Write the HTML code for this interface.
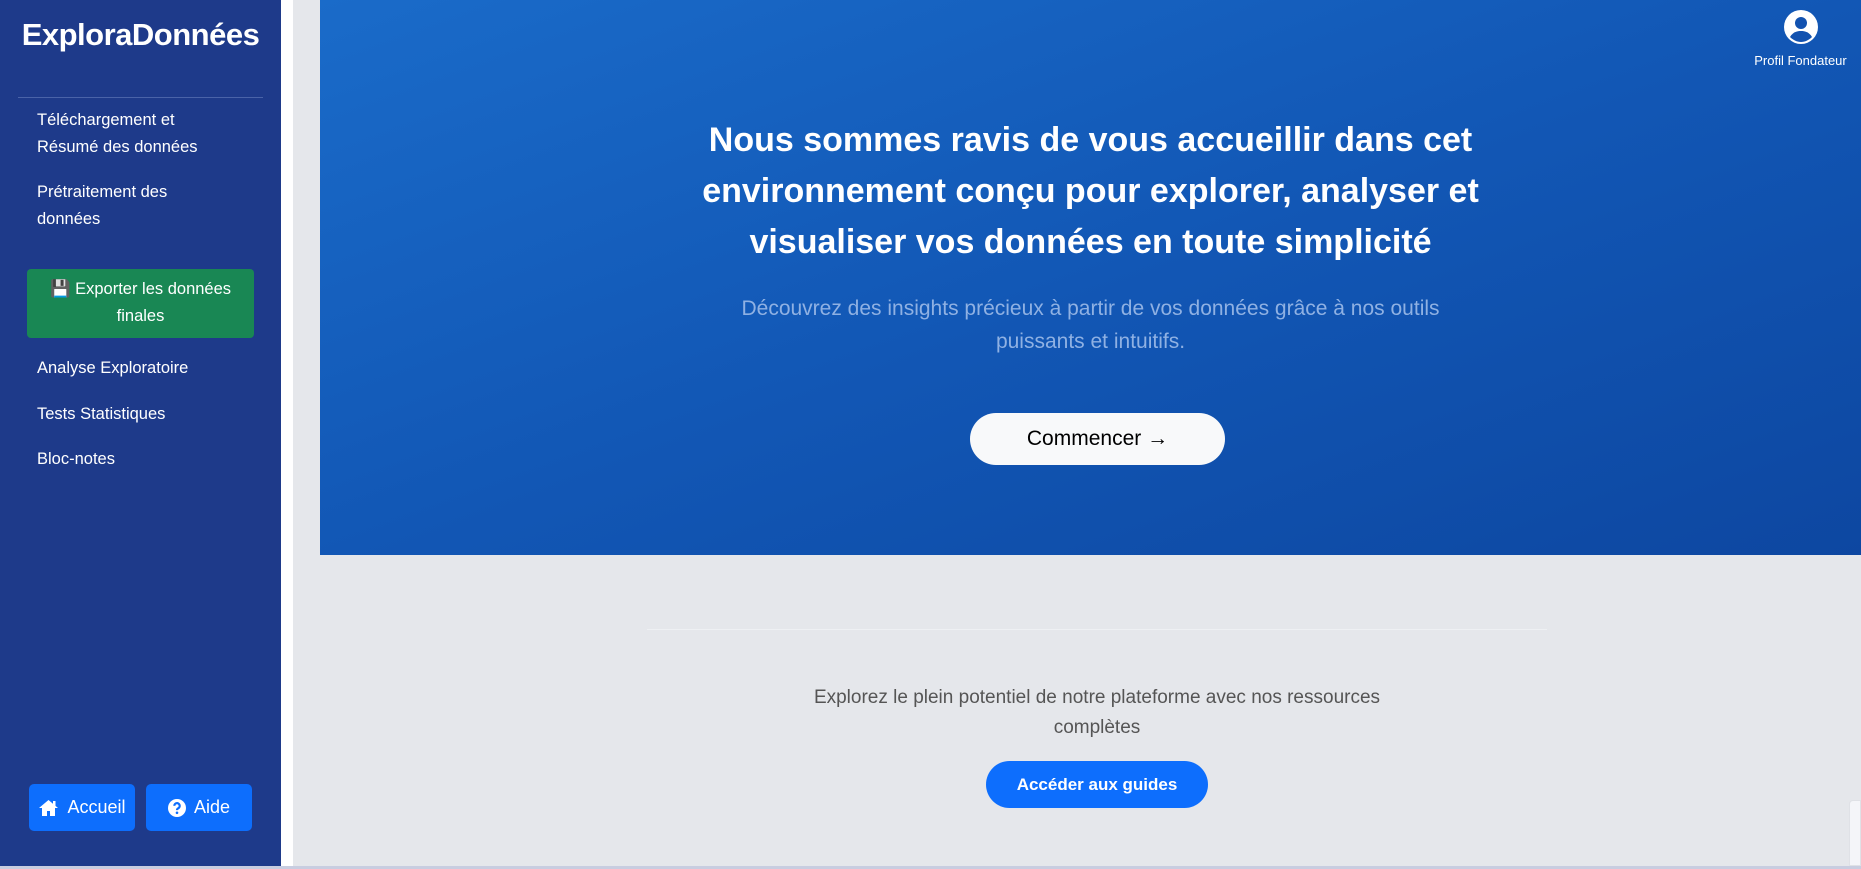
<!DOCTYPE html>
<html><head><meta charset="utf-8">
<style>
*{margin:0;padding:0;box-sizing:border-box}
body{width:1861px;height:869px;overflow:hidden;background:#e5e7eb;font-family:"Liberation Sans",sans-serif;position:relative}
.side{position:absolute;left:0;top:0;width:281px;height:866px;background:#1e3a8a;color:#fff}
.strip{position:absolute;left:281px;top:0;width:12px;height:866px;background:#fff}
.title{position:absolute;left:0;width:281px;top:17px;text-align:center;font-size:31px;font-weight:bold;letter-spacing:-0.5px}
.hr{position:absolute;left:18px;width:245px;top:97px;height:1px;background:#4a63a8}
.nav{position:absolute;left:37px;font-size:16.5px;line-height:27px;color:#fff}
.exp{position:absolute;left:27px;top:269px;width:227px;height:69px;background:#198754;border-radius:4px;text-align:center;font-size:16.5px;line-height:27px;padding-top:7px}
.btn{position:absolute;top:784px;height:47px;background:#0d6efd;border-radius:5px;color:#fff;font-size:18px;display:flex;align-items:center;justify-content:center;gap:8px}
.hero{position:absolute;left:320px;top:0;width:1541px;height:555px;background:linear-gradient(160deg,#1a6bc9 0%,#1257b5 50%,#0d47a1 100%)}
h1{position:absolute;left:0;width:1541px;top:115px;text-align:center;color:#fff;font-size:34px;line-height:51px;font-weight:bold}
.sub{position:absolute;left:0;width:1541px;top:292px;text-align:center;color:#8fb1e3;font-size:21px;line-height:33px}
.go{position:absolute;left:650px;top:413px;width:255px;height:52px;border-radius:26px;background:#f8f9fa;color:#000;font-size:21px;display:flex;align-items:center;justify-content:center}
.prof{position:absolute;left:1740px;top:9px;width:121px;text-align:center;color:#fff;font-size:13px}
.div{position:absolute;left:647px;top:629px;width:900px;height:1px;background:#eef0f3}
.low{position:absolute;left:647px;width:900px;top:683px;text-align:center;color:#555;font-size:19px;line-height:30px}
.guide{position:absolute;left:986px;top:761px;width:222px;height:47px;border-radius:24px;background:#0d6efd;color:#fff;font-weight:bold;font-size:17px;display:flex;align-items:center;justify-content:center}
.bline{position:absolute;left:0;top:866px;width:1861px;height:3px;background:#c8cde0}
.rbox{position:absolute;left:1849px;top:800px;width:12px;height:66px;background:#f4f5f9;border-radius:4px 0 0 0;border:1px solid #dfe1e6}
</style></head><body>
<div class="side">
<div class="title">ExploraDonnées</div>
<div class="hr"></div>
<div class="nav" style="top:107px">Téléchargement et<br>Résumé des données</div>
<div class="nav" style="top:179px">Prétraitement des<br>données</div>
<div class="exp">💾 Exporter les données<br>finales</div>
<div class="nav" style="top:355px">Analyse Exploratoire</div>
<div class="nav" style="top:401px">Tests Statistiques</div>
<div class="nav" style="top:446px">Bloc-notes</div>
<div class="btn" style="left:29px;width:106px"><svg width="21" height="18" viewBox="0 0 21 18"><path d="M10.5 1L1 9h3v8h5v-5h3v5h5V9h3z" fill="#fff"/><rect x="15" y="2" width="2.5" height="5" fill="#fff"/></svg>Accueil</div>
<div class="btn" style="left:146px;width:106px"><svg width="18" height="18" viewBox="0 0 18 18"><circle cx="9" cy="9" r="9" fill="#fff"/><path d="M6.3 6.8a2.7 2.7 0 1 1 4 2.4c-.9.5-1.3.9-1.3 1.9" stroke="#0d6efd" stroke-width="2.2" fill="none"/><circle cx="9" cy="13.8" r="1.3" fill="#0d6efd"/></svg>Aide</div>
</div>
<div class="strip"></div>
<div class="hero">
<h1>Nous sommes ravis de vous accueillir dans cet<br>environnement conçu pour explorer, analyser et<br>visualiser vos données en toute simplicité</h1>
<div class="sub">Découvrez des insights précieux à partir de vos données grâce à nos outils<br>puissants et intuitifs.</div>
<div class="go">Commencer →</div>
</div>
<div class="prof"><svg width="36" height="36" viewBox="0 0 36 36" style="display:block;margin:0 auto 8px"><circle cx="18" cy="18" r="17" fill="#fff"/><circle cx="18" cy="14" r="6" fill="#1252b0"/><path d="M7 28c3-5 7-6 11-6s8 1 11 6c-3 3-7 5-11 5s-8-2-11-5z" fill="#1252b0"/></svg>Profil Fondateur</div>
<div class="div"></div>
<div class="low">Explorez le plein potentiel de notre plateforme avec nos ressources<br>complètes</div>
<div class="guide">Accéder aux guides</div>
<div class="rbox"></div>
<div class="bline"></div>
</body></html>
